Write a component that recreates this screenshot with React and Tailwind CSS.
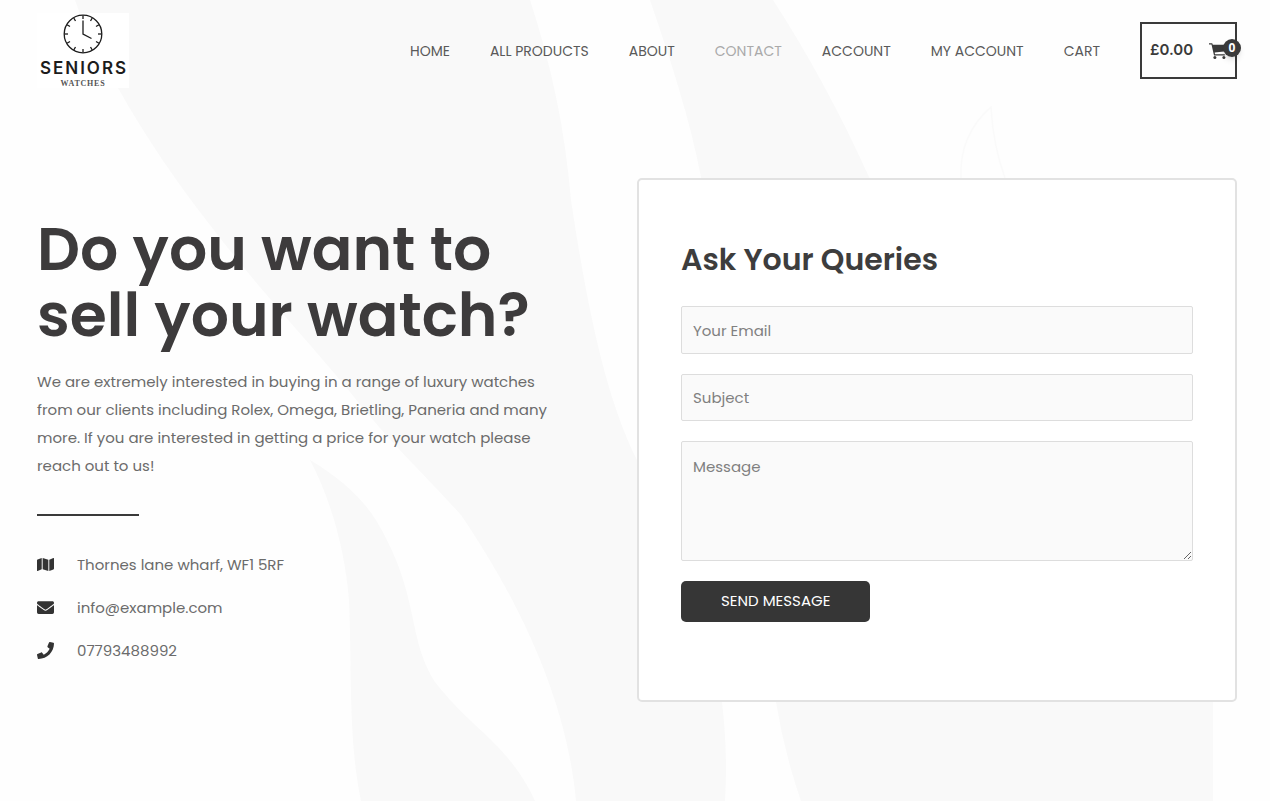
import { FaMap, FaEnvelope, FaPhone } from "react-icons/fa";

const links = ["Home", "All Products", "About", "Contact", "Account", "My Account", "Cart"];

const contacts = [
  { Icon: FaMap, text: "Thornes lane wharf, WF1 5RF" },
  { Icon: FaEnvelope, text: "info@example.com" },
  { Icon: FaPhone, text: "07793488992" },
];

const ticks = [0, 30, 60, 90, 120, 150, 180, 210, 240, 270, 300, 330];

function Backdrop() {
  return (
    <svg
      className="absolute inset-0 -z-10 h-full w-full"
      viewBox="0 0 1270 801"
      preserveAspectRatio="xMidYMid slice"
      aria-hidden="true"
    >
      <g fill="#f9f9f9">
        <path d="M75 0C84 27 99 56 118 88C148 141 178 184 210 225C257 287 304 336 350 392C389 442 428 478 461 515C510 587 566 690 576 801H725C727 768 726 737 722 702C712 615 684 540 637 460C608 402 589 320 571 200C565 130 552 67 530 0Z" />
        <path d="M650 0C672 64 690 120 701 177L776 702Q784 752 801 801H1213V600L869 177Q825 80 773 0Z" />
        <path d="M310 460C331 500 345 550 349 600C352 667 348 740 361 801H535C509 744 471 729 435 682C407 637 420 598 380 527C365 500 343 480 310 460Z" />
      </g>
      <path
        d="M961 178Q959 135 991 107Q993 145 1005 178"
        fill="none"
        stroke="#fafafa"
        strokeWidth="1.500"
      />
    </svg>
  );
}

function Logo() {
  return (
    <a href="#home" className="flex h-[75px] w-[92px] flex-col items-center bg-white text-[#1c1c1c]">
      <svg className="mt-px size-10 shrink-0" viewBox="0 0 40 40" fill="none" stroke="currentColor" aria-hidden="true">
        <circle cx="20" cy="20" r="18.8" strokeWidth="1.3" />
        {ticks.map((a) => (
          <path key={a} d="M20 1.5V5" strokeWidth="1.3" transform={`rotate(${a} 20 20)`} />
        ))}
        <path d="M20 6.500V20L28.500 24.500" strokeWidth="1.3" />
      </svg>
      <span className="pl-[2px] pt-1 font-['Inter',sans-serif] text-[17px] leading-5 font-semibold tracking-[2px]">SENIORS</span>
      <span className="pt-[2px] font-['Liberation_Serif',serif] text-[8px] leading-2 font-bold tracking-widest text-[#555555]">
        WATCHES
      </span>
    </a>
  );
}

function CartIcon() {
  return (
    <svg className="size-[18px]" viewBox="0 0 18 18" fill="currentColor" aria-hidden="true">
      <path d="M0 1.200H3.200L3.800 2.700H17.200V9.200L5.700 10.600L6 12.300H15.800V13.400H5L2.500 2.400H0Z" />
      <circle cx="5.900" cy="15.600" r="1.500" />
      <circle cx="14.900" cy="15.600" r="1.500" />
    </svg>
  );
}

const field =
  "block w-full rounded-xs border border-[#dddddd] bg-[#fafafa] px-[11px] text-[15px] text-[#666666] placeholder:text-[#808080] outline-none";

export default function App() {
  return (
    <div className="relative isolate min-h-screen overflow-hidden bg-[#fefefe] pr-[33px] pl-[37px] font-['Poppins','Inter',sans-serif] text-[#6b6b6b]">
      <Backdrop />
      <header className="flex items-center justify-between pt-[13px]">
        <Logo />
        <div className="flex items-center gap-10">
          <nav className="flex gap-10 text-sm text-[#5a5a5a] uppercase">
            {links.map((name) => (
              <a key={name} href="#page" className={name === "Contact" ? "text-[#aaaaaa]" : ""}>
                {name}
              </a>
            ))}
          </nav>
          <a
            href="#basket"
            aria-label="View cart"
            className="flex h-[57px] w-[97px] items-center justify-between border-2 border-[#3a3a3a] px-2 text-[#3a3a3a]"
          >
            <span className="font-['Inter',sans-serif] text-[15px] font-semibold">£0.00</span>
            <span className="relative">
              <CartIcon />
              <span className="absolute -top-[3px] left-3.5 flex size-[18px] items-center justify-center rounded-full bg-[#3a3a3a] font-['Open_Sans',sans-serif] text-xs font-bold text-white shadow-md">
                0
              </span>
            </span>
          </a>
        </div>
      </header>

      <main className="grid grid-cols-2 items-center pt-[90px] pb-[99px]">
        <section className="pr-20">
          <h1 className="text-6xl leading-[66px] font-semibold text-[#3d3b3c]">
            Do you want to sell your watch?
          </h1>
          <p className="pt-5 text-[15px] leading-7">
            We are extremely interested in buying in a range of luxury watches from our clients including Rolex,
            Omega, Brietling, Paneria and many more. If you are interested in getting a price for your watch please
            reach out to us!
          </p>
          <hr className="mt-[34px] mb-[35px] w-[102px] border-t-2 border-[#3a3a3a]" />
          <ul className="flex flex-col gap-[15px]">
            {contacts.map(({ Icon, text }) => (
              <li key={text} className="flex items-center gap-[23px] text-[15px] leading-7">
                <Icon className="size-[17px] text-[#333333]" />
                {text}
              </li>
            ))}
          </ul>
        </section>

        <section className="rounded-[5px] border-2 border-[#e2e2e2] bg-white px-[42px] pt-[60px] pb-[78px]">
          <h2 className="text-[30px] leading-10 font-semibold text-[#3d3d3d]">Ask Your Queries</h2>
          <form className="flex flex-col items-start gap-5 pt-[26px]" onSubmit={(e) => e.preventDefault()}>
            <input type="email" aria-label="Your Email" placeholder="Your Email" className={`${field} h-12`} />
            <input type="text" aria-label="Subject" placeholder="Subject" className={`${field} h-[47px]`} />
            <textarea
              aria-label="Message"
              placeholder="Message"
              className={`${field} h-[120px] resize-y py-3 leading-[26px]`}
            />
            <button type="submit" className="h-[41px] rounded-[5px] bg-[#363636] px-10 text-[15px] text-white">
              SEND MESSAGE
            </button>
          </form>
        </section>
      </main>
    </div>
  );
}
